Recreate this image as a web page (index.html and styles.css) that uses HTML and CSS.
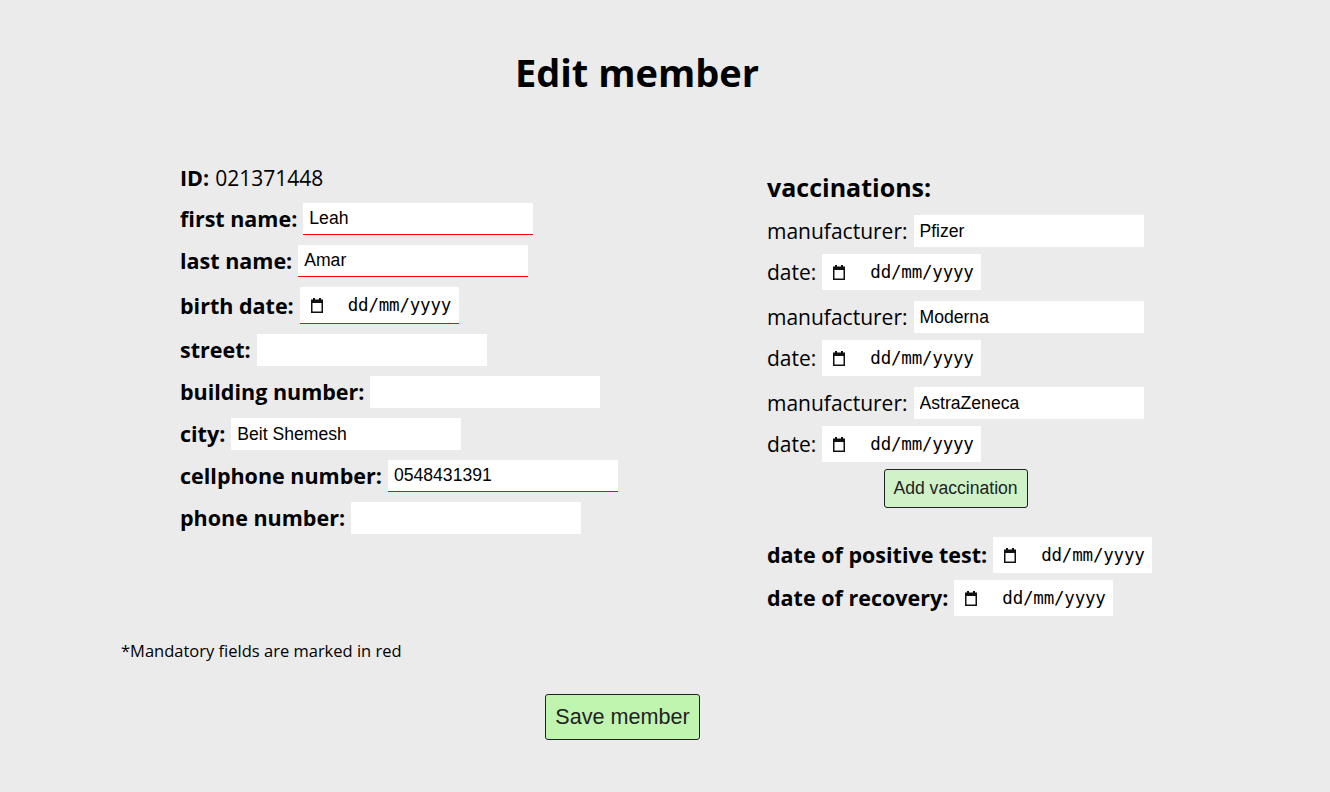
FILE: index.html
```html
<!DOCTYPE html>
<html lang="en">
<head>
<meta charset="utf-8">
<title>Edit member</title>
<link rel="stylesheet" href="styles.css">
</head>
<body>
<h1 class="title">Edit member</h1>
<div class="form">
  <div class="col-left">
    <div class="row id-row"><span class="lbl">ID:</span> <span class="val">021371448</span></div>
    <div class="row"><span class="lbl">first name:</span><input class="txt req" type="text" value="Leah"></div>
    <div class="row"><span class="lbl">last name:</span><input class="txt req" type="text" value="Amar"></div>
    <div class="row"><span class="lbl">birth date:</span><div class="date req"><svg class="cal" width="14" height="15" viewBox="0 0 14 15"><rect x="3" y="0" width="2" height="2"/><rect x="9" y="0" width="2" height="2"/><path fill-rule="evenodd" d="M1 1.5h12v13.5H1z M2.5 5h9v8.5h-9z"/></svg><span class="dtxt">dd/mm/yyyy</span></div></div>
    <div class="row"><span class="lbl">street:</span><input class="txt" type="text" value=""></div>
    <div class="row"><span class="lbl">building number:</span><input class="txt" type="text" value=""></div>
    <div class="row"><span class="lbl">city:</span><input class="txt" type="text" value="Beit Shemesh"></div>
    <div class="row"><span class="lbl">cellphone number:</span><input class="txt req" type="text" value="0548431391"></div>
    <div class="row"><span class="lbl">phone number:</span><input class="txt" type="text" value=""></div>
  </div>
  <div class="col-right">
    <h2 class="vac-title">vaccinations:</h2>
    <div class="vac">
      <div class="row"><span class="lbl light">manufacturer:</span><input class="txt" type="text" value="Pfizer"></div>
      <div class="row"><span class="lbl light">date:</span><div class="date"><svg class="cal" width="14" height="15" viewBox="0 0 14 15"><rect x="3" y="0" width="2" height="2"/><rect x="9" y="0" width="2" height="2"/><path fill-rule="evenodd" d="M1 1.5h12v13.5H1z M2.5 5h9v8.5h-9z"/></svg><span class="dtxt">dd/mm/yyyy</span></div></div>
    </div>
    <div class="vac">
      <div class="row"><span class="lbl light">manufacturer:</span><input class="txt" type="text" value="Moderna"></div>
      <div class="row"><span class="lbl light">date:</span><div class="date"><svg class="cal" width="14" height="15" viewBox="0 0 14 15"><rect x="3" y="0" width="2" height="2"/><rect x="9" y="0" width="2" height="2"/><path fill-rule="evenodd" d="M1 1.5h12v13.5H1z M2.5 5h9v8.5h-9z"/></svg><span class="dtxt">dd/mm/yyyy</span></div></div>
    </div>
    <div class="vac">
      <div class="row"><span class="lbl light">manufacturer:</span><input class="txt" type="text" value="AstraZeneca"></div>
      <div class="row"><span class="lbl light">date:</span><div class="date"><svg class="cal" width="14" height="15" viewBox="0 0 14 15"><rect x="3" y="0" width="2" height="2"/><rect x="9" y="0" width="2" height="2"/><path fill-rule="evenodd" d="M1 1.5h12v13.5H1z M2.5 5h9v8.5h-9z"/></svg><span class="dtxt">dd/mm/yyyy</span></div></div>
    </div>
    <div class="add-wrap"><button class="btn add-btn" type="button">Add vaccination</button></div>
    <div class="covid">
      <div class="row"><span class="lbl">date of positive test:</span><div class="date"><svg class="cal" width="14" height="15" viewBox="0 0 14 15"><rect x="3" y="0" width="2" height="2"/><rect x="9" y="0" width="2" height="2"/><path fill-rule="evenodd" d="M1 1.5h12v13.5H1z M2.5 5h9v8.5h-9z"/></svg><span class="dtxt">dd/mm/yyyy</span></div></div>
      <div class="row"><span class="lbl">date of recovery:</span><div class="date"><svg class="cal" width="14" height="15" viewBox="0 0 14 15"><rect x="3" y="0" width="2" height="2"/><rect x="9" y="0" width="2" height="2"/><path fill-rule="evenodd" d="M1 1.5h12v13.5H1z M2.5 5h9v8.5h-9z"/></svg><span class="dtxt">dd/mm/yyyy</span></div></div>
    </div>
  </div>
</div>
<p class="note">*Mandatory fields are marked in red</p>
<div class="save-wrap"><button class="btn save-btn" type="button">Save member</button></div>
</body>
</html>
```
FILE: styles.css
```css
* { box-sizing: border-box; }
html, body { margin: 0; padding: 0; }
body {
  background: #ebebeb;
  font-family: "Open Sans", "Noto Sans", sans-serif;
  color: #000;
  width: 1330px;
  height: 792px;
  overflow: hidden;
}
.title {
  margin: 0;
  padding-top: 48px;
  padding-right: 56px;
  font-size: 38px;
  line-height: 48px;
  font-weight: 700;
  text-align: center;
}
.form {
  display: grid;
  grid-template-columns: 587px 377px;
  padding-left: 180px;
  margin-top: 64px;
}
.col-left {
  display: flex;
  flex-direction: column;
  gap: 10px;
}
.row {
  display: flex;
  align-items: center;
  gap: 6px;
  min-height: 32px;
}
.id-row {
  height: 36px;
  gap: 6px;
  margin-bottom: -3px;
}
.lbl {
  font-size: 21.5px;
  font-weight: 700;
  line-height: 1;
  white-space: nowrap;
  flex: none;
}
.lbl.light { font-weight: 400; font-size: 21px; }
.val { font-size: 21px; line-height: 1; }
.txt {
  flex: none;
  width: 230px;
  height: 32px;
  border: none;
  background: #fff;
  padding: 0 6px;
  font-family: "Liberation Sans", Arial, sans-serif;
  font-size: 17.6px;
  color: #000;
  outline: none;
  margin: 0;
}
.req { border-bottom: 1px solid #f00; }
.date {
  flex: none;
  width: 159px;
  height: 37px;
  background: #fff;
  display: flex;
  align-items: center;
  padding-left: 10px;
}
.cal { fill: #111; flex: none; }
.dtxt {
  margin-left: 24px;
  font-family: "DejaVu Sans Mono", "Liberation Mono", monospace;
  font-size: 17.5px;
  letter-spacing: -0.2px;
  color: #000;
  white-space: nowrap;
}
.col-right {
  padding-top: 10px;
  display: flex;
  flex-direction: column;
}
.vac-title {
  margin: 0 0 11px;
  font-size: 25px;
  line-height: 34px;
  font-weight: 700;
}
.vac {
  display: flex;
  flex-direction: column;
  gap: 7px;
  margin-bottom: 11px;
}
.vac .date { height: 36px; }
.add-wrap {
  display: flex;
  justify-content: center;
  margin-top: -4px;
}
.btn {
  font-family: "Liberation Sans", Arial, sans-serif;
  border: 1px solid #222;
  border-radius: 3px;
  color: #222;
  margin: 0;
}
.add-btn {
  background: #d0f2c8;
  font-size: 17.6px;
  height: 39px;
  width: 144px;
  padding: 0;
}
.covid {
  margin-top: 29px;
  display: flex;
  flex-direction: column;
  gap: 7px;
}
.covid .date { height: 36px; }
.note {
  margin: 0;
  padding-left: 121px;
  padding-top: 21px;
  font-size: 16.5px;
  line-height: 28px;
}
.save-wrap {
  padding-left: 545px;
  margin-top: 29px;
}
.save-btn {
  background: #c0f5b0;
  font-size: 21.6px;
  height: 46px;
  width: 155px;
  padding: 0;
}
```
